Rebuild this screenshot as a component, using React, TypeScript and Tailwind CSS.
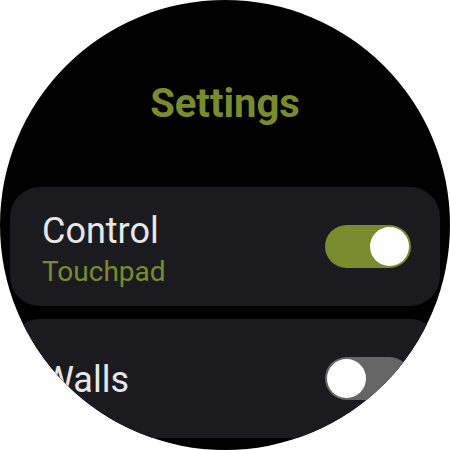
import { useState } from 'react';

interface SettingRow {
    id: string;
    label: string;
    value?: string;
    enabled: boolean;
}

function Toggle({ on, onChange }: { on: boolean; onChange: () => void }) {
    return (
        <button
            onClick={onChange}
            className={`flex h-[43px] w-[86px] shrink-0 items-center rounded-full px-[2px] ${on ? 'justify-end bg-[#7a8b2d]' : 'justify-start bg-[#666666]'}`}
        >
            <span className="block h-[39px] w-[39px] rounded-full bg-white" />
        </button>
    );
}

export default function App() {
    const [rows, setRows] = useState<SettingRow[]>([
        { id: 'control', label: 'Control', value: 'Touchpad', enabled: true },
        { id: 'walls', label: 'Walls', enabled: false },
    ]);

    const toggle = (id: string) => {
        setRows(rows.map(r => (r.id === id ? { ...r, enabled: !r.enabled } : r)));
    };

    return (
        <div className="h-[450px] w-[450px] bg-white" style={{ fontFamily: 'Roboto, sans-serif' }}>
            <div className="h-full w-full overflow-hidden rounded-full bg-black">
                <h1 className="pt-[84px] text-center text-[40px] font-bold leading-[40px] text-[#7a8b2d]">
                    Settings
                </h1>

                <div className="mt-[63px] flex flex-col gap-[13px] px-[10px]">
                    {rows.map(row => (
                        <div
                            key={row.id}
                            className="flex h-[119px] items-center justify-between rounded-[30px] bg-[#1b1b1f] pl-[32px] pr-[29px]"
                        >
                            <div className={`flex flex-col ${row.value ? 'pt-[4px]' : 'pt-[2px]'}`}>
                                <span className="text-[36px] leading-[42px] text-[#e8e8ea]">{row.label}</span>
                                {row.value && (
                                    <span className="mt-[4px] text-[28px] leading-[32px] text-[#7a8b2d]">{row.value}</span>
                                )}
                            </div>
                            <Toggle on={row.enabled} onChange={() => toggle(row.id)} />
                        </div>
                    ))}
                </div>
            </div>
        </div>
    );
}
